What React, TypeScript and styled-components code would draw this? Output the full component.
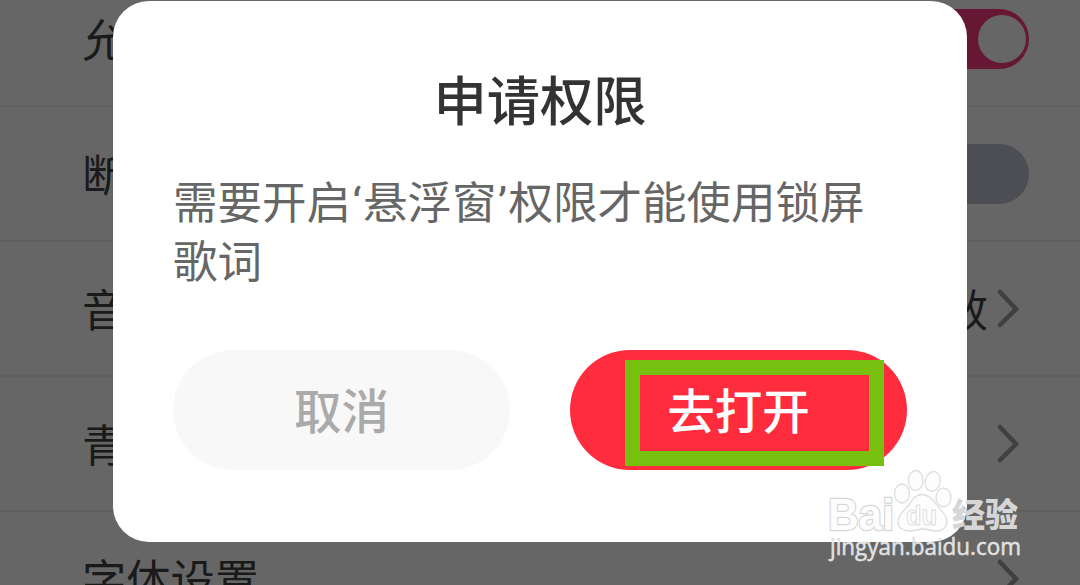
import styled, { createGlobalStyle } from 'styled-components';

const GlobalStyle = createGlobalStyle`
  * {
    box-sizing: border-box;
  }

  body {
    margin: 0;
    background: #666666;
    font-family: Roboto, 'Noto Sans CJK SC', sans-serif;
  }
`;

const Screen = styled.div`
  position: relative;
  width: 1080px;
  height: 585px;
  overflow: hidden;
  background: #666666;
`;

const Settings = styled.div`
  display: flex;
  flex-direction: column;
  margin-top: -28px;
`;

const Row = styled.div`
  display: flex;
  flex-shrink: 0;
  align-items: center;
  justify-content: space-between;
  height: 135px;
  padding: 0 51px 0 82px;
  border-bottom: 2px solid #5f5f5f;
`;

const Label = styled.span`
  padding-top: 6px;
  color: #1a1a1a;
  font-size: 44.3px;
  line-height: 60px;
  white-space: nowrap;
`;

const Value = styled.div`
  display: flex;
  align-items: center;
  gap: 9px;
  padding-right: 10px;
`;

const Switch = styled.div<{ $on?: boolean }>`
  display: flex;
  align-items: center;
  justify-content: ${({ $on }) => ($on ? 'flex-end' : 'flex-start')};
  width: 108px;
  height: 60px;
  padding: 0 3px;
  border-radius: 30px;
  background: ${({ $on }) => ($on ? '#661733' : '#4d4e53')};
`;

const Knob = styled.span`
  width: 48px;
  height: 48px;
  border-radius: 50%;
  background: #666666;
`;

const Overlay = styled.div`
  position: absolute;
  inset: 0;
  display: flex;
  justify-content: center;
  align-items: flex-start;
  padding-top: 1px;
`;

const Dialog = styled.div`
  display: flex;
  flex-direction: column;
  width: 854px;
  height: 541px;
  padding: 66px 60px 72px;
  border-radius: 36px;
  background: #ffffff;
`;

const Title = styled.h1`
  margin: 0;
  color: #333333;
  font-size: 53.3px;
  font-weight: 500;
  line-height: 72px;
  text-align: center;
`;

const Message = styled.p`
  margin: 36px 0 0;
  color: #666666;
  font-size: 44.5px;
  line-height: 59px;
  white-space: nowrap;
`;

const Quote = styled.span`
  display: inline-block;
  width: 12px;
  text-align: center;
`;

const Actions = styled.div`
  display: flex;
  justify-content: space-between;
  margin-top: auto;
`;

const Button = styled.button<{ $primary?: boolean }>`
  display: flex;
  align-items: center;
  justify-content: center;
  width: 337px;
  height: 120px;
  padding: 0 0 3px;
  border: 0;
  border-radius: 60px;
  background: ${({ $primary }) => ($primary ? '#ff2c3e' : '#f8f8f8')};
  color: ${({ $primary }) => ($primary ? '#ffffff' : '#aaaaaa')};
  font-family: inherit;
  font-size: 47.5px;
  font-weight: 500;
`;

const Highlight = styled.div`
  position: absolute;
  left: 625px;
  top: 360px;
  width: 259px;
  height: 106px;
  border: 15px solid #78c010;
`;

const Watermark = styled.svg`
  position: absolute;
  left: 820px;
  top: 460px;
`;

const Brand = styled.text`
  font-family: 'Liberation Sans', sans-serif;
  font-size: 44px;
  font-weight: 700;
  fill: #fdfdfd;
  stroke: #d6d6d6;
  stroke-width: 2.4px;
  stroke-linejoin: round;
  paint-order: stroke;
`;

const Chevron = () => (
  <svg width="22" height="40" viewBox="0 0 22 40" fill="none">
    <path d="M3 3L19 20L3 36" stroke="#404040" strokeWidth="4.500" strokeLinecap="round" />
  </svg>
);

export default function App(): JSX.Element {
  return (
    <Screen>
      <GlobalStyle />
      <Settings>
        <Row>
          <Label>允</Label>
          <Switch $on>
            <Knob />
          </Switch>
        </Row>
        <Row>
          <Label>断</Label>
          <Switch />
        </Row>
        <Row>
          <Label>音</Label>
          <Value>
            <Label>效</Label>
            <Chevron />
          </Value>
        </Row>
        <Row>
          <Label>青</Label>
          <Value>
            <Chevron />
          </Value>
        </Row>
        <Row>
          <Label>字体设置</Label>
          <Value>
            <Chevron />
          </Value>
        </Row>
      </Settings>
      <Overlay>
        <Dialog>
          <Title>申请权限</Title>
          <Message>
            需要开启<Quote>‘</Quote>悬浮窗<Quote>’</Quote>权限才能使用锁屏
            <br />
            歌词
          </Message>
          <Actions>
            <Button>取消</Button>
            <Button $primary>去打开</Button>
          </Actions>
        </Dialog>
      </Overlay>
      <Highlight />
      <Watermark width="220" height="110" viewBox="0 0 220 110">
        <Brand x="8" y="69.500" textLength="66" lengthAdjust="spacingAndGlyphs">
          Bai
        </Brand>
        <g fill="#fdfdfd" stroke="#dddddd" strokeWidth="1.3">
          <ellipse cx="82" cy="33.500" rx="7.500" ry="9.500" />
          <ellipse cx="95.700" cy="20.500" rx="7.300" ry="10" />
          <ellipse cx="112.700" cy="21.500" rx="7.500" ry="10" transform="rotate(12 112.700 21.500)" />
          <ellipse cx="123.500" cy="37.500" rx="7.500" ry="9.300" />
          <path d="M102 34.500C95 34.500 92 40 88 46C83 52 78 55 78 62C78 68 83 71 90 71C95 71 98 69 103 69C108 69 111 71 116 71C123 71 127 67 127 61C127 55 121 51 117 45C113 39 109 34.500 102 34.500Z" />
          <text
            x="86"
            y="65"
            fontFamily="Liberation Sans"
            fontSize="27"
            fontWeight="700"
            strokeWidth="1"
            textLength="31"
            lengthAdjust="spacingAndGlyphs"
          >
            du
          </text>
        </g>
        <text
          x="132"
          y="67"
          fontFamily="Noto Sans CJK SC"
          fontWeight="900"
          fontSize="33"
          textLength="66"
          lengthAdjust="spacingAndGlyphs"
          fill="#d6d6d6"
        >
          经验
        </text>
        <text
          x="10"
          y="95"
          fontFamily="Open Sans"
          fontWeight="500"
          fontSize="23"
          textLength="191"
          lengthAdjust="spacingAndGlyphs"
          fill="#e2e2e2"
          stroke="#e2e2e2"
          strokeWidth="0.5"
        >
          jingyan.baidu.com
        </text>
      </Watermark>
    </Screen>
  );
}
